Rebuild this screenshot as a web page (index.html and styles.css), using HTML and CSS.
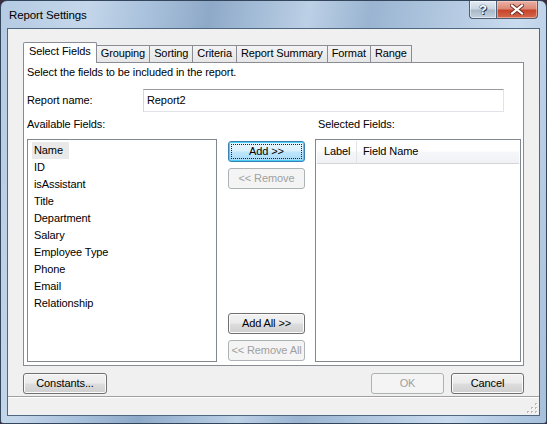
FILE: index.html
```html
<!DOCTYPE html>
<html>
<head>
<meta charset="utf-8">
<link rel="stylesheet" href="styles.css">
</head>
<body>
<div class="window">
  <div class="titlebar">
    <span class="title">Report Settings</span>
    <div class="caption">
      <div class="cap help">?</div>
      <div class="cap close">
        <svg width="14" height="11" viewBox="0 0 14 11">
          <path d="M2 1.5 L12 9.5 M12 1.5 L2 9.5" stroke="#6b2a1e" stroke-width="4" stroke-linecap="square" fill="none"/>
          <path d="M2 1.5 L12 9.5 M12 1.5 L2 9.5" stroke="#ffffff" stroke-width="2.2" stroke-linecap="square" fill="none"/>
        </svg>
      </div>
    </div>
  </div>
  <div class="client">
    <div class="tabs">
      <div class="tab active">Select Fields</div>
      <div class="tab">Grouping</div>
      <div class="tab">Sorting</div>
      <div class="tab">Criteria</div>
      <div class="tab">Report Summary</div>
      <div class="tab">Format</div>
      <div class="tab">Range</div>
    </div>
    <div class="panel">
      <div class="desc">Select the fields to be included in the report.</div>
      <div class="name-row">
        <span class="name-label">Report name:</span>
        <div class="textbox">Report2</div>
      </div>
      <div class="fields">
        <div class="lbl">Available Fields:</div>
        <div></div>
        <div class="lbl lbl-sel">Selected Fields:</div>
        <div class="listbox">
          <div class="item"><span class="sel">Name</span></div>
          <div class="item">ID</div>
          <div class="item">isAssistant</div>
          <div class="item">Title</div>
          <div class="item">Department</div>
          <div class="item">Salary</div>
          <div class="item">Employee Type</div>
          <div class="item">Phone</div>
          <div class="item">Email</div>
          <div class="item">Relationship</div>
        </div>
        <div class="btncol">
          <div class="group">
            <div class="btn default">Add &gt;&gt;</div>
            <div class="btn disabled">&lt;&lt; Remove</div>
          </div>
          <div class="group">
            <div class="btn">Add All &gt;&gt;</div>
            <div class="btn disabled">&lt;&lt; Remove All</div>
          </div>
        </div>
        <div class="listview">
          <div class="lv-header">
            <div class="col col-label">Label</div>
            <div class="col col-name">Field Name</div>
          </div>
        </div>
      </div>
    </div>
    <div class="footer">
      <div class="btn btn-const">Constants...</div>
      <div class="footer-right">
        <div class="btn btn-ok disabled">OK</div>
        <div class="btn btn-ok">Cancel</div>
      </div>
    </div>
    <div class="status">
      <svg class="grip" width="11" height="11" viewBox="0 0 11 11">
        <g fill="#b8b8b8">
          <rect x="8" y="0" width="2" height="2"/>
          <rect x="4" y="4" width="2" height="2"/><rect x="8" y="4" width="2" height="2"/>
          <rect x="0" y="8" width="2" height="2"/><rect x="4" y="8" width="2" height="2"/><rect x="8" y="8" width="2" height="2"/>
        </g>
        <g fill="#ffffff">
          <rect x="9" y="1" width="1" height="1"/>
          <rect x="5" y="5" width="1" height="1"/><rect x="9" y="5" width="1" height="1"/>
          <rect x="1" y="9" width="1" height="1"/><rect x="5" y="9" width="1" height="1"/><rect x="9" y="9" width="1" height="1"/>
        </g>
      </svg>
    </div>
  </div>
</div>
</body>
</html>
```
FILE: styles.css
```css
* { box-sizing: border-box; }
html, body {
  margin: 0;
  padding: 0;
  width: 547px;
  height: 424px;
  overflow: hidden;
  background: #3b2c3c;
}
body {
  font-family: "Liberation Sans", Arial, sans-serif;
  font-size: 11px;
  letter-spacing: -0.1px;
  color: #000;
}
.window {
  width: 547px;
  height: 424px;
  border: 1px solid #34465c;
  border-radius: 7px 7px 3px 3px;
  background:
    linear-gradient(100deg,
      #b4cbe3 0%, #c4d6ea 14%, #a9c1dc 24%, #8ea9c8 34%, #9fb8d4 40%,
      #bcd0e6 50%, #9ab4d1 60%, #b2c8e0 72%, #c9dbee 84%, #a6bfdb 100%);
  display: flex;
  flex-direction: column;
}
.titlebar {
  height: 27px;
  display: flex;
  justify-content: space-between;
  align-items: flex-start;
  padding-left: 8px;
  padding-right: 8px;
}
.title {
  font-size: 11.5px;
  letter-spacing: -0.1px;
  margin-top: 8px;
  color: #000;
}
.caption {
  display: flex;
}
.cap {
  height: 18px;
  border: 1px solid #4d5f75;
  border-top: none;
  display: flex;
  align-items: center;
  justify-content: center;
}
.help {
  width: 27px;
  border-radius: 0 0 0 4px;
  border-right: none;
  background: linear-gradient(#e4ebf3 0%, #c9d5e2 45%, #a9b8c9 55%, #c3d1df 100%);
  box-shadow: inset 0 0 0 1px rgba(255,255,255,0.5);
  color: #ffffff;
  font-weight: bold;
  font-size: 13px;
  text-shadow: 0 0 1px #2d3b4c, 0 0 1px #2d3b4c, 1px 1px 0 #2d3b4c;
}
.close {
  width: 42px;
  border-radius: 0 0 4px 0;
  background: linear-gradient(#eab1a5 0%, #dc8a77 45%, #c8442b 55%, #d56a4c 100%);
  box-shadow: inset 0 0 0 1px rgba(255,220,210,0.5);
}
.client {
  margin: 0 6px;
  height: 388px;
  border: 1px solid #4f6680;
  background: #f0f0f0;
  padding: 13px 15px 0 15px;
  display: flex;
  flex-direction: column;
}
.tabs {
  height: 20px;
  display: flex;
  align-items: flex-end;
}
.tab {
  height: 17px;
  padding: 0 4px;
  border: 1px solid #898c95;
  border-bottom: none;
  margin-left: -1px;
  background: linear-gradient(#f3f3f3, #e6e6e6);
  line-height: 15px;
}
.tab:first-child { margin-left: 0; }
.tab.active {
  height: 21px;
  margin-bottom: -1px;
  padding: 0 5px;
  background: #ffffff;
  position: relative;
  z-index: 1;
  line-height: 17px;
  border-radius: 2px 2px 0 0;
}
.panel {
  background: #ffffff;
  border: 1px solid #898c95;
  padding: 3px 2px 3px 3px;
  height: 304px;
}
.desc {
  line-height: 13px;
  height: 13px;
}
.name-row {
  margin-top: 10px;
  display: flex;
  align-items: center;
  height: 23px;
}
.name-label {
  width: 116px;
  margin-top: -1px;
}
.textbox {
  width: 361px;
  height: 23px;
  border: 1px solid #e2e3ea;
  border-top-color: #9a9ca3;
  border-left-color: #d3d6dd;
  padding: 3px 3px;
  line-height: 15px;
}
.fields {
  margin-top: 6px;
  display: grid;
  grid-template-columns: 190px 77px 205px;
  grid-template-rows: 13px 223px;
  column-gap: 11px;
  row-gap: 8px;
}
.fields > .listview { margin-left: -1px; }
.lbl {
  line-height: 13px;
}
.lbl-sel {
  padding-left: 2px;
}
.listbox {
  border: 1px solid #828790;
  padding: 2px 4px;
}
.item {
  height: 17px;
  line-height: 17px;
  padding-left: 2px;
}
.sel {
  display: inline-block;
  background: #e9e9e9;
  margin-left: -2px;
  padding: 0 6px 0 2px;
}
.btncol {
  display: flex;
  flex-direction: column;
  justify-content: space-between;
  padding: 2px 0 1px 0;
}
.group {
  display: flex;
  flex-direction: column;
  gap: 6px;
}
.btn {
  height: 21px;
  border: 1px solid #707070;
  border-radius: 3px;
  background: linear-gradient(#f2f2f2 0%, #ebebeb 48%, #dddddd 52%, #cfcfcf 100%);
  box-shadow: inset 0 0 0 1px #fbfbfb;
  display: flex;
  align-items: center;
  justify-content: center;
  white-space: nowrap;
  line-height: 13px;
  padding-bottom: 1px;
}
.btn.default {
  border-color: #3c7fb1;
  background: linear-gradient(#eaf6fd 0%, #d9f0fc 48%, #bee6fd 52%, #a7d9f5 100%);
  box-shadow: inset 0 0 0 1px #48d0f8;
  outline: 1px dotted #222;
  outline-offset: -4px;
}
.btn.disabled {
  border-color: #adb2b5;
  background: #f4f4f4;
  box-shadow: none;
  color: #a0a0a0;
}
.listview {
  border: 1px solid #828790;
  padding: 1px;
}
.lv-header {
  height: 23px;
  display: flex;
  background: linear-gradient(#ffffff 0%, #ffffff 45%, #f6f7f9 50%, #eff1f4 100%);
  border-bottom: 1px solid #d5d5d5;
}
.col {
  line-height: 21px;
}
.col-label {
  width: 40px;
  padding-left: 7px;
  border-right: 1px solid #e2e4e8;
}
.col-name {
  padding-left: 6px;
}
.footer {
  margin-top: 7px;
  display: flex;
  justify-content: space-between;
}
.btn-const {
  width: 84px;
}
.footer-right {
  display: flex;
  gap: 7px;
}
.btn-ok {
  width: 73px;
}
.status {
  margin: 2px -15px 0 -15px;
  height: 19px;
  border-top: 1px solid #a0a0a0;
  box-shadow: inset 0 1px 0 #ffffff;
  display: flex;
  justify-content: flex-end;
  align-items: flex-end;
  padding: 0 1px 1px 0;
}
.grip {
  display: block;
}
```
